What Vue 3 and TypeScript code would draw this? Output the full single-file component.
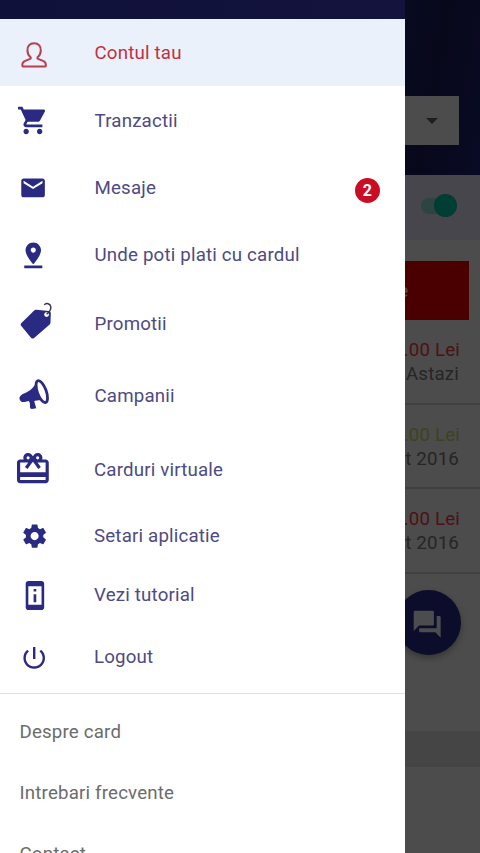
<script setup lang="ts">
interface MenuItem {
  label: string
  icon: string
  height: number
  badge?: number
}

interface Transaction {
  amount: string
  date: string
  kind: 'debit' | 'credit'
}

const menu: MenuItem[] = [
  { label: 'Contul tau', icon: 'user', height: 67 },
  { label: 'Tranzactii', icon: 'cart', height: 69 },
  { label: 'Mesaje', icon: 'mail', height: 64, badge: 2 },
  { label: 'Unde poti plati cu cardul', icon: 'pin', height: 70 },
  { label: 'Promotii', icon: 'tag', height: 68 },
  { label: 'Campanii', icon: 'horn', height: 76 },
  { label: 'Carduri virtuale', icon: 'gift', height: 72 },
  { label: 'Setari aplicatie', icon: 'gear', height: 60 },
  { label: 'Vezi tutorial', icon: 'device', height: 58 },
  { label: 'Logout', icon: 'power', height: 66 },
]

const links: string[] = ['Despre card', 'Intrebari frecvente', 'Contact']

const transactions: Transaction[] = [
  { amount: '100.00 Lei', date: 'Astazi', kind: 'debit' },
  { amount: '100.00 Lei', date: 'August 2016', kind: 'credit' },
  { amount: '100.00 Lei', date: 'August 2016', kind: 'debit' },
]
</script>

<template>
  <div class="screen">
    <main class="page">
      <header class="hero">
        <div class="select"><span class="caret"></span></div>
      </header>
      <div class="toggle-bar">
        <div class="switch"><span class="thumb"></span></div>
      </div>
      <div class="action">Plateste</div>
      <section class="list">
        <article v-for="(t, i) in transactions" :key="i" class="transaction">
          <span :class="t.kind">{{ t.amount }}</span>
          <span class="date">{{ t.date }}</span>
        </article>
      </section>
      <div class="fab-area">
        <div class="fab">
          <svg width="32.4" height="32.4" viewBox="0 0 24 24">
            <path d="M21 6h-2v9H6v2c0 .55.45 1 1 1h11l4 4V7c0-.55-.45-1-1-1zm-4 6V3c0-.55-.45-1-1-1H3c-.55 0-1 .45-1 1v14l4-4h10c.55 0 1-.45 1-1z" />
          </svg>
        </div>
      </div>
      <div class="band"></div>
    </main>

    <aside class="drawer">
      <div class="status"></div>
      <nav>
        <div
          v-for="(item, i) in menu"
          :key="item.icon"
          class="item"
          :class="{ active: i === 0, lower: i > 5 }"
          :style="{ height: item.height + 'px' }"
        >
          <svg class="icon" width="60" height="56" viewBox="0 0 60 56">
            <path
              v-if="item.icon === 'user'"
              class="outline"
              d="M34.1 18.2c-4.600 0-7 3.200-6.700 7.400.2 2.800 1.300 5.100 3 6.400.7.6.5 1.500-.3 1.900l-5.400 2.200c-1.700.8-2.400 2-2.400 3.800 0 1.100.5 1.600 1.500 1.600h20.600c1 0 1.500-.5 1.500-1.600 0-1.800-.7-3-2.400-3.800l-5.400-2.200c-.8-.4-1-1.300-.3-1.900 1.700-1.300 2.800-3.600 3-6.400.3-4.200-2.100-7.400-6.700-7.400z"
            />
            <g v-else-if="item.icon === 'cart'" transform="translate(16.700 11) scale(1.350 1.370)">
              <path d="M7 18c-1.100 0-1.990.9-1.990 2S5.900 22 7 22s2-.9 2-2-.9-2-2-2zM1 2v2h2l3.600 7.590-1.350 2.450c-.16.280-.25.610-.25.960 0 1.100.9 2 2 2h12v-2H7.420c-.14 0-.25-.11-.25-.25l.03-.12.9-1.630h7.450c.75 0 1.410-.41 1.750-1.030l3.580-6.490c.08-.14.120-.31.120-.48 0-.55-.45-1-1-1H5.210l-.94-2H1zm16 16c-1.100 0-1.990.9-1.990 2s.89 2 1.990 2 2-.9 2-2-.9-2-2-2z" />
            </g>
            <g v-else-if="item.icon === 'mail'" transform="translate(18.900 14.700) scale(1.180)">
              <path d="M20 4H4c-1.100 0-1.990.9-1.990 2L2 18c0 1.100.9 2 2 2h16c1.100 0 2-.9 2-2V6c0-1.100-.9-2-2-2zm0 4l-8 5-8-5V6l8 5 8-5v2z" />
            </g>
            <g v-else-if="item.icon === 'pin'" transform="translate(17.800 13.800) scale(1.290)">
              <path d="M18 8c0-3.310-2.690-6-6-6S6 4.690 6 8c0 4.500 6 11 6 11s6-6.500 6-11zm-8 0c0-1.100.9-2 2-2s2 .9 2 2-.89 2-2 2c-1.100 0-2-.9-2-2zM5 20v2h14v-2H5z" />
            </g>
            <g v-else-if="item.icon === 'tag'">
              <path d="M36.500 14.800l12.200 1.200c1.300.1 2 .9 2.100 2.200l-.3 8.800c0 1.300-.4 2.200-1.400 3l-15 12.900c-1.200 1-2.300.9-3.300-.3l-9.500-11.500c-1-1.200-.8-2.400.4-3.400l11.700-11.500c.9-.9 1.900-1.500 3.100-1.400z" />
              <circle class="hole" cx="46.600" cy="19.600" r="2.400" />
              <path class="string" d="M46.600 19.300c3-2.400 4.600-5 4.200-7.600-.4-2.900-4.500-4.400-6.500-1.800" />
            </g>
            <g v-else-if="item.icon === 'horn'">
              <path d="M36.500 13.500c-1.500 6.500-6.200 10.500-12.500 13.100-3.500 1.500-5.300 3.700-4.200 6.200.9 2 2.500 2.700 4.700 2.100l4.200-.8c1.500 1.500 1.300 3.600 1.300 5.900 0 1.300.7 2 1.900 2l4.300-.7-2-7.300c4.200-1.100 8.300-.8 12.300 1z" />
              <ellipse class="bell" cx="41.800" cy="24.600" rx="4.400" ry="11.600" transform="rotate(-20 41.800 24.600)" />
            </g>
            <g v-else-if="item.icon === 'gift'" transform="translate(13.800 8.900) scale(1.590)">
              <path d="M20 6h-2.180c.11-.31.180-.65.180-1 0-1.660-1.340-3-3-3-1.050 0-1.960.54-2.500 1.350l-.5.670-.5-.68C10.960 2.540 10.050 2 9 2 7.340 2 6 3.340 6 5c0 .35.070.69.180 1H4c-1.110 0-1.990.89-1.990 2L2 19c0 1.110.89 2 2 2h16c1.110 0 2-.89 2-2V8c0-1.110-.89-2-2-2zm-5-2c.55 0 1 .45 1 1s-.45 1-1 1-1-.45-1-1 .45-1 1-1zM9 4c.55 0 1 .45 1 1s-.45 1-1 1-1-.45-1-1 .45-1 1-1zm11 15H4v-2h16v2zm0-5H4V8h5.080L7 10.830 8.620 12 11 8.760l1-1.360 1 1.360L15.380 12 17 10.830 14.920 8H20v6z" />
            </g>
            <g v-else-if="item.icon === 'gear'" transform="translate(20.700 15.200) scale(1.160)">
              <path d="M19.430 12.980c.04-.32.070-.64.070-.98s-.03-.66-.07-.98l2.110-1.650c.19-.15.240-.42.120-.64l-2-3.460c-.12-.22-.39-.3-.61-.22l-2.490 1c-.52-.4-1.080-.73-1.690-.98l-.38-2.650C14.460 2.180 14.250 2 14 2h-4c-.25 0-.46.180-.49.420l-.38 2.650c-.61.250-1.170.590-1.690.98l-2.490-1c-.23-.09-.49 0-.61.220l-2 3.460c-.13.220-.07.490.12.640l2.110 1.650c-.04.320-.07.650-.07.980s.03.660.07.980l-2.110 1.650c-.19.150-.24.420-.12.640l2 3.460c.12.220.39.300.61.220l2.490-1c.52.400 1.080.730 1.690.980l.38 2.650c.03.240.24.420.49.420h4c.25 0 .46-.18.490-.42l.38-2.650c.61-.25 1.170-.59 1.690-.98l2.490 1c.23.090.49 0 .61-.22l2-3.460c.12-.22.070-.49-.12-.64l-2.110-1.650zM12 15.500c-1.930 0-3.500-1.570-3.500-3.500s1.570-3.500 3.500-3.500 3.500 1.570 3.500 3.500-1.570 3.500-3.500 3.500z" />
            </g>
            <g v-else-if="item.icon === 'device'" transform="translate(19.100 13.700) scale(1.320)">
              <path d="M13 7h-2v2h2V7zm0 4h-2v6h2v-6zm4-9.990L7 1c-1.100 0-2 .9-2 2v18c0 1.100.9 2 2 2h10c1.100 0 2-.9 2-2V3c0-1.100-.9-1.990-2-1.990zM17 19H7V5h10v14z" />
            </g>
            <g v-else transform="translate(19.800 15.500) scale(1.200)">
              <path d="M13 3h-2v10h2V3zm4.830 2.170l-1.420 1.420C17.990 7.860 19 9.810 19 12c0 3.870-3.130 7-7 7s-7-3.130-7-7c0-2.190 1.010-4.140 2.580-5.420L6.170 5.170C4.230 6.820 3 9.260 3 12c0 4.970 4.030 9 9 9s9-4.030 9-9c0-2.740-1.230-5.180-3.170-6.830z" />
            </g>
          </svg>
          <span class="label">{{ item.label }}</span>
          <span v-if="item.badge" class="badge">{{ item.badge }}</span>
        </div>
      </nav>
      <div class="links">
        <div v-for="link in links" :key="link" class="link">{{ link }}</div>
      </div>
    </aside>
  </div>
</template>

<style>
body {
  margin: 0;
  overflow: hidden;
}
</style>

<style scoped>
.screen {
  position: relative;
  width: 480px;
  height: 853px;
  overflow: hidden;
  font-family: Roboto, "Liberation Sans", sans-serif;
  font-size: 18.7px;
  letter-spacing: 0.18px;
  background: #4c4c4c;
}
.page {
  display: flex;
  flex-direction: column;
  height: 853px;
  color: #252525;
}
.hero {
  box-sizing: border-box;
  height: 175px;
  padding: 96px 21px 0 20px;
  background: linear-gradient(100deg, #080a20 80%, #07081a 88%, #090b25);
}
.select {
  display: flex;
  align-items: center;
  justify-content: flex-end;
  height: 49px;
  padding-right: 21px;
  background: #4b4c4b;
}
.caret {
  border: 6px solid transparent;
  border-top: 6px solid #1d1d1d;
  border-bottom: 0;
}
.toggle-bar {
  display: flex;
  justify-content: flex-end;
  box-sizing: border-box;
  height: 65px;
  padding: 22.500px 23px 0 0;
  background: #47464c;
}
.switch {
  display: flex;
  justify-content: flex-end;
  align-items: center;
  width: 36px;
  height: 16px;
  border-radius: 8px;
  background: #2d4542;
}
.thumb {
  width: 23px;
  height: 23px;
  border-radius: 50%;
  background: #003d32;
}
.action {
  display: flex;
  align-items: center;
  justify-content: flex-end;
  height: 59px;
  margin: 21px 11px 0 20px;
  padding-right: 60.500px;
  background: #4b0000;
  color: #5c4444;
  line-height: 24px;
  font-weight: 500;
}
.list {
  display: flex;
  flex-direction: column;
}
.transaction {
  display: flex;
  flex-direction: column;
  align-items: flex-end;
  box-sizing: border-box;
  height: 84.500px;
  padding: 18px 20px 0 0;
  line-height: 24px;
  border-bottom: 2px solid #404040;
}
.debit {
  color: #4c1114;
}
.credit {
  color: #3e4220;
}
.date {
  margin-right: 1px;
}
.fab-area {
  display: flex;
  justify-content: flex-end;
  height: 157px;
}
.fab {
  display: flex;
  align-items: center;
  justify-content: center;
  width: 65px;
  height: 65px;
  margin: 16.500px 19px 0 0;
  border-radius: 50%;
  background: #0c0c2b;
  box-shadow: 0 3px 6px #00000050;
  fill: #4b4c4e;
}
.fab svg {
  margin: 4px 3px 0 0;
}
.band {
  height: 36px;
  background: #454545;
}
.drawer {
  position: absolute;
  inset: 0 auto 0 0;
  width: 405.400px;
  overflow: hidden;
  background: #fff;
}
.status {
  height: 19px;
  background: linear-gradient(90deg, #10113a, #13133d);
}
nav {
  padding-bottom: 4px;
  border-bottom: 1px solid #e0e0e0;
}
.item {
  display: flex;
  align-items: center;
  color: #4e4a82;
  fill: #2b2a83;
}
.active {
  background: #eaf1fb;
  color: #c2303f;
}
.icon {
  flex: none;
  overflow: visible;
}
.label {
  flex: 1;
  margin-left: 34.500px;
  padding-top: 1px;
}
.lower .label {
  margin-left: 34px;
}
.outline {
  fill: none;
  stroke: #b83e50;
  stroke-width: 2;
}
.hole {
  fill: #fff;
}
.string {
  fill: none;
  stroke: #34334c;
  stroke-width: 1.400;
}
.bell {
  fill: #fff;
  stroke: #2b2a83;
  stroke-width: 2.800;
}
.badge {
  width: 25px;
  height: 25px;
  margin: 7px 25.500px 0 0;
  border-radius: 50%;
  background: #c90d22;
  color: #fff;
  font-size: 16px;
  font-weight: 700;
  line-height: 25px;
  text-align: center;
}
.links {
  padding: 8px 0 0 19.500px;
  color: #6c6c6c;
}
.link {
  height: 61px;
  line-height: 61px;
}
</style>
